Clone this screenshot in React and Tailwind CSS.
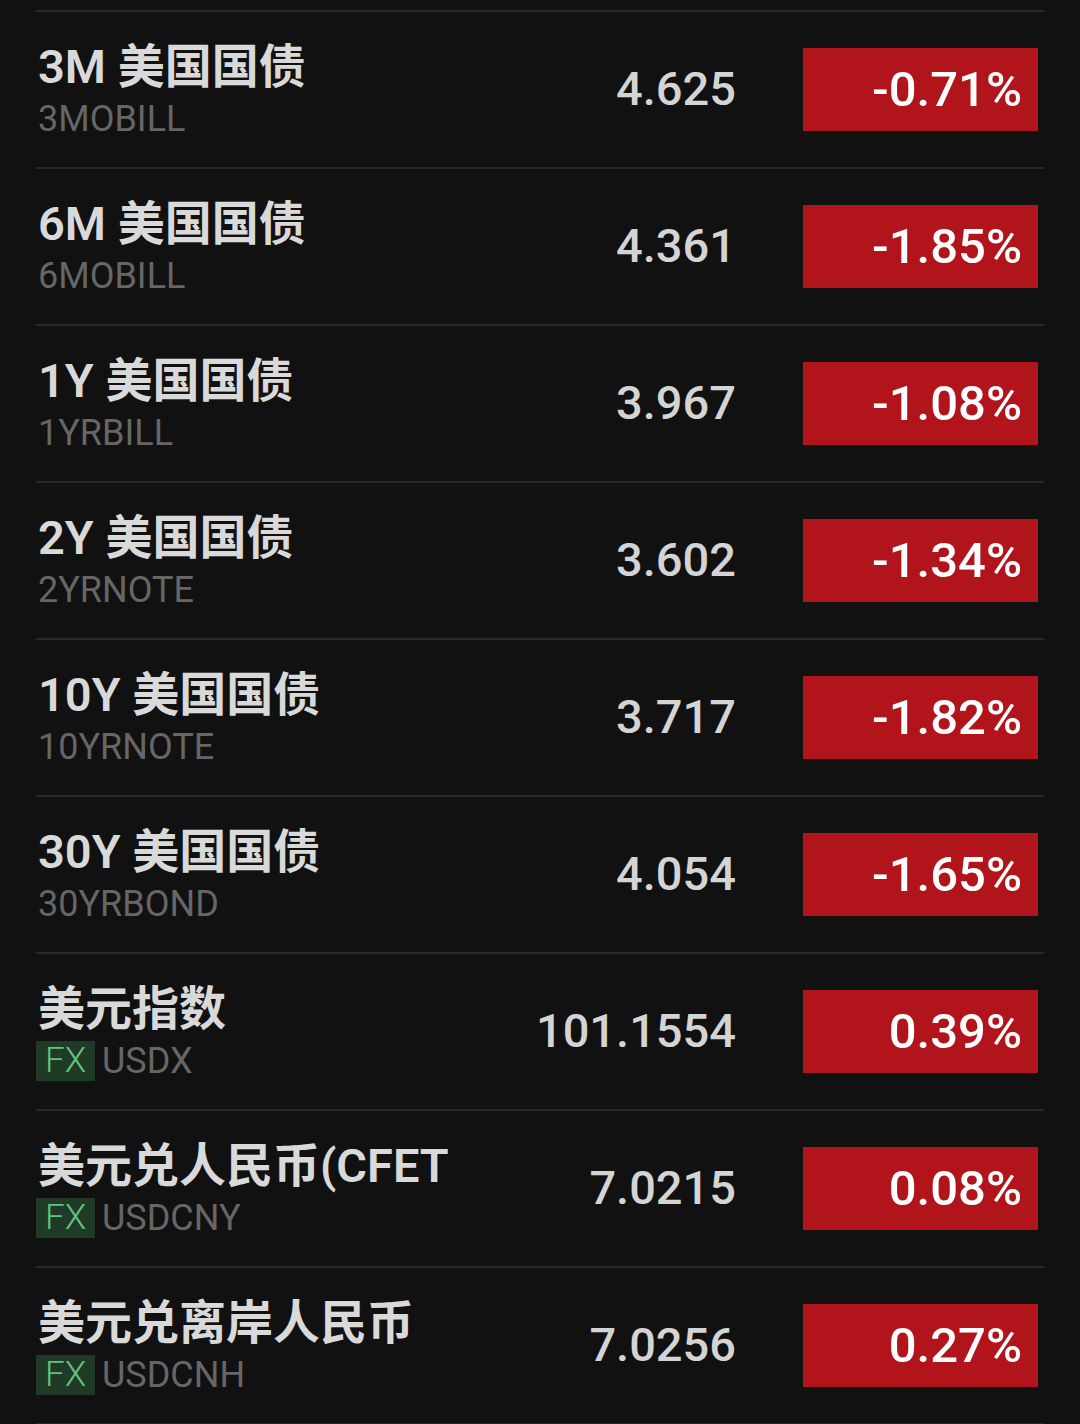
const rows = [
  { name: "3M 美国国债", code: "3MOBILL", price: "4.625", pct: "-0.71%" },
  { name: "6M 美国国债", code: "6MOBILL", price: "4.361", pct: "-1.85%" },
  { name: "1Y 美国国债", code: "1YRBILL", price: "3.967", pct: "-1.08%" },
  { name: "2Y 美国国债", code: "2YRNOTE", price: "3.602", pct: "-1.34%" },
  { name: "10Y 美国国债", code: "10YRNOTE", price: "3.717", pct: "-1.82%" },
  { name: "30Y 美国国债", code: "30YRBOND", price: "4.054", pct: "-1.65%" },
  { name: "美元指数", code: "USDX", price: "101.1554", pct: "0.39%", fx: true },
  { name: "美元兑人民币(CFET", code: "USDCNY", price: "7.0215", pct: "0.08%", fx: true },
  { name: "美元兑离岸人民币", code: "USDCNH", price: "7.0256", pct: "0.27%", fx: true },
];

export default function App() {
  return (
    <div
      className="w-[1080px] h-[1424px] bg-[#111111] pt-[10px] overflow-hidden"
      style={{ fontFamily: 'Roboto, "Noto Sans CJK SC", sans-serif' }}
    >
      <div className="ml-[36px] w-[1008px] border-t-2 border-[#282828]">
        {rows.map((r) => (
          <div
            key={r.code}
            className="h-[157px] border-b-2 border-[#282828] flex items-center"
          >
            <div className="flex-1 min-w-0 flex flex-col pl-[2px]">
              <div className="text-[47px] leading-[54px] font-semibold text-[#d9d9d9] whitespace-nowrap">
                {r.name}
              </div>
              <div className="flex items-center mt-[5px] h-[40px]">
                {r.fx && (
                  <span className="h-[40px] w-[59px] -ml-[2px] mr-[7px] bg-[#1f3a27] text-[#63c27e] text-[35px] font-light leading-[40px] text-center">
                    FX
                  </span>
                )}
                <span className="text-[36px] leading-[40px] text-[#666666]">
                  {r.code}
                </span>
              </div>
            </div>
            <div className="w-[240px] shrink-0 text-right text-[47px] font-medium text-[#d4d4d4] mr-[67px] whitespace-nowrap">
              {r.price}
            </div>
            <div className="w-[235px] h-[83px] shrink-0 bg-[#b2141b] flex items-center justify-end pr-[16px] mr-[6px] text-[49px] font-medium text-white whitespace-nowrap">
              {r.pct}
            </div>
          </div>
        ))}
      </div>
    </div>
  );
}
